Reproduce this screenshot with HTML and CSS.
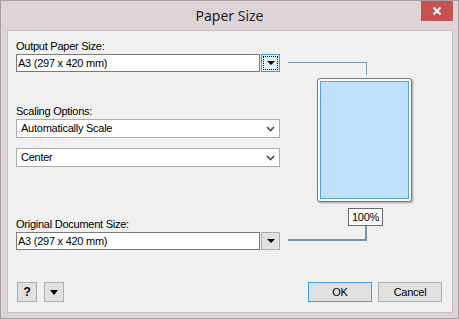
FILE: index.html
```html
<!DOCTYPE html>
<html>
<head>
<meta charset="utf-8">
<link rel="stylesheet" href="styles.css">
</head>
<body>
<div class="window">
  <div class="titlebar">
    <div class="title">Paper Size</div>
    <div class="close"><svg width="10" height="10" viewBox="0 0 10 10"><path d="M1.5 1.5 L8.5 8.5 M8.5 1.5 L1.5 8.5" stroke="#fff" stroke-width="2" fill="none"/></svg></div>
  </div>
  <div class="content">
    <div class="main">
      <div class="left">
        <div class="label">Output Paper Size:</div>
        <div class="fieldrow">
          <div class="field">A3 (297 x 420 mm)</div>
          <div class="dropbtn focus"><svg width="8" height="4" viewBox="0 0 8 4"><polygon points="0,0 8,0 4,4" fill="#000"/></svg></div>
        </div>
        <div class="label gap-scaling">Scaling Options:</div>
        <div class="combo"><span>Automatically Scale</span><svg class="chev" width="9" height="6" viewBox="0 0 9 6"><path d="M1 1 L4.5 4.5 L8 1" stroke="#4a4a4a" stroke-width="1.6" fill="none"/></svg></div>
        <div class="combo second"><span>Center</span><svg class="chev" width="9" height="6" viewBox="0 0 9 6"><path d="M1 1 L4.5 4.5 L8 1" stroke="#4a4a4a" stroke-width="1.6" fill="none"/></svg></div>
        <div class="label gap-original">Original Document Size:</div>
        <div class="fieldrow">
          <div class="field">A3 (297 x 420 mm)</div>
          <div class="dropbtn"><svg width="8" height="4" viewBox="0 0 8 4"><polygon points="0,0 8,0 4,4" fill="#000"/></svg></div>
        </div>
      </div>
      <div class="right">
        <div class="conn-top"></div>
        <div class="paper"><div class="sheet"></div></div>
        <div class="pct">100%</div>
        <div class="conn-bottom"></div>
      </div>
    </div>
    <div class="footer">
      <div class="btn small help">?</div>
      <div class="btn small more"><svg width="8" height="5" viewBox="0 0 8 5"><polygon points="0,0 8,0 4,5" fill="#000"/></svg></div>
      <div class="btn wide ok">OK</div>
      <div class="btn wide cancel">Cancel</div>
    </div>
  </div>
</div>
</body>
</html>
```
FILE: styles.css
```css
* { box-sizing: border-box; }
html, body { margin: 0; padding: 0; }
body {
  width: 459px;
  height: 319px;
  font-family: "Liberation Sans", Arial, sans-serif;
  font-size: 11px;
  letter-spacing: -0.25px;
  color: #000;
  background: #ded4d8;
}
.window {
  width: 459px;
  height: 319px;
  border: 1px solid #a79ea2;
  background: #ded4d8;
  display: flex;
  flex-direction: column;
}
.titlebar {
  height: 29px;
  flex: none;
  display: grid;
  grid-template-columns: 1fr auto 1fr;
  align-items: start;
}
.title {
  grid-column: 2;
  margin-top: 5px;
  font-family: "Noto Sans", sans-serif;
  font-size: 14px;
  line-height: 19px;
  letter-spacing: 0;
  color: #222;
}
.close {
  grid-column: 3;
  justify-self: end;
  width: 32px;
  height: 20px;
  margin-right: 5px;
  background: #c75050;
  display: flex;
  align-items: center;
  justify-content: center;
}
.content {
  flex: 1;
  margin: 0 5px 5px 6px;
  border: 1px solid #cbc2c6;
  background: #f0f0f0;
  padding: 8px 8px 10px 8px;
  display: flex;
  flex-direction: column;
}
.main { display: flex; }
.left { width: 264px; display: flex; flex-direction: column; }
.label { line-height: 15px; height: 15px; color: #000; }
.gap-scaling { margin-top: 32px; }
.gap-original { margin-top: 50px; }
.fieldrow { display: flex; gap: 1px; height: 18px; }
.field {
  width: 244px;
  height: 18px;
  border: 1px solid #7a7a7a;
  background: #fff;
  padding-left: 1px;
  line-height: 16px;
  white-space: nowrap;
}
.dropbtn {
  width: 19px;
  height: 18px;
  border: 1px solid #adadad;
  background: #e1e1e1;
  display: flex;
  align-items: center;
  justify-content: center;
}
.dropbtn.focus {
  border-color: #3399ff;
  background: #e5f1fb;
  outline: 1px dotted #000;
  outline-offset: -3px;
}
.combo {
  width: 264px;
  height: 19px;
  border: 1px solid #acacac;
  background: #fff;
  padding: 0 4px 0 4px;
  line-height: 17px;
  display: flex;
  align-items: center;
  justify-content: space-between;
}
.combo.second { margin-top: 10px; }
.chev { margin-right: 0; margin-top: 1px; }
.right {
  width: 170px;
  display: flex;
  flex-direction: column;
  align-items: flex-start;
}
.conn-top {
  margin-top: 23px;
  margin-left: 8px;
  width: 79px;
  height: 13px;
  border-top: 1px solid #7896b6;
  border-right: 1px solid #7896b6;
}
.paper {
  margin-top: 3px;
  margin-left: 37px;
  width: 95px;
  height: 124px;
  border: 1px solid #7d7d7d;
  border-radius: 3px;
  background: #fafafa;
  box-shadow: 1px 1px 2px rgba(0,0,0,0.35);
  padding: 2px;
}
.sheet {
  width: 89px;
  height: 118px;
  border: 1px solid #5b9fe3;
  background: #bee1fd;
}
.pct {
  margin-top: 6px;
  margin-left: 68px;
  width: 35px;
  height: 18px;
  border: 1px solid #6a6a6a;
  background: #fff;
  text-align: center;
  line-height: 16px;
  font-size: 11px;
}
.conn-bottom {
  margin-left: 8px;
  width: 79px;
  height: 15px;
  border-right: 2px solid #7393b3;
  border-bottom: 2px solid #7393b3;
}
.footer {
  margin-top: auto;
  display: flex;
  align-items: center;
  padding-right: 2px;
}
.btn {
  height: 20px;
  border: 1px solid #adadad;
  background: #e1e1e1;
  display: flex;
  align-items: center;
  justify-content: center;
  line-height: 18px;
}
.btn.small { width: 20px; }
.help { margin-left: 1px; font-weight: bold; font-size: 12px; }
.more { margin-left: 7px; width: 19px; }
.btn.wide { width: 64px; }
.ok { margin-left: auto; border-color: #3c9cf0; }
.cancel { margin-left: 6px; }
```
